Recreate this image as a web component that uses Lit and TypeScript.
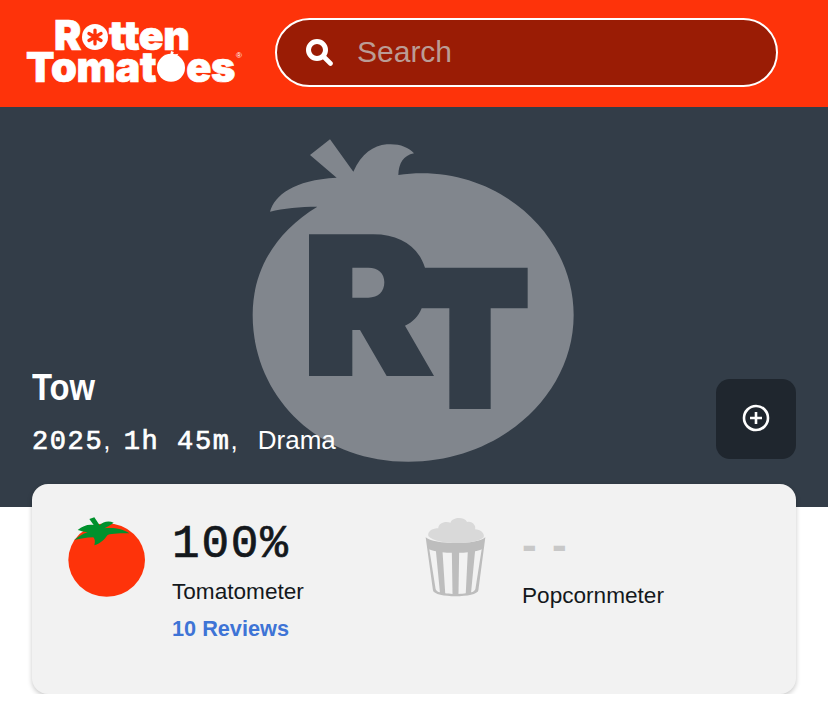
import { LitElement, html, css } from 'lit';
import { customElement } from 'lit/decorators.js';

const SANS = css`"Liberation Sans", Arial, sans-serif`;
const MONO = css`"Liberation Mono", "Courier New", monospace`;

@customElement('app-root')
export class AppRoot extends LitElement {
  static styles = css`
    :host {
      display: block;
      font-family: ${SANS};
      background: #fff;
      color: #14181c;
    }

    .header {
      height: 107px;
      box-sizing: border-box;
      background: #fe330a;
      display: flex;
      align-items: center;
      padding: 0 50px 3px 26px;
      gap: 36px;
    }

    .logo {
      width: 213px;
      flex: none;
      position: relative;
      display: flex;
      flex-direction: column;
      align-items: flex-start;
      margin-bottom: 4px;
      color: #fff;
      font-family: Inter, ${SANS};
      font-weight: 900;
      line-height: 29px;
      -webkit-text-stroke: 0.7px #fff;
    }

    .logo-line {
      display: flex;
      align-items: baseline;
      height: 29px;
      white-space: nowrap;
    }

    .logo-top {
      font-size: 41px;
      letter-spacing: -0.4px;
      margin-left: 28px;
    }

    .logo-bottom {
      font-size: 41.5px;
      letter-spacing: -0.3px;
    }

    .logo-o {
      flex: none;
      margin: 0 1px -1px 1px;
    }

    .reg {
      position: absolute;
      right: -3px;
      top: 31px;
      font-size: 8px;
      line-height: 8px;
      letter-spacing: 0;
      font-family: ${SANS};
      font-weight: 400;
      -webkit-text-stroke: 0;
    }

    .search {
      flex: 1;
      height: 69px;
      box-sizing: border-box;
      display: flex;
      align-items: center;
      gap: 24px;
      padding-left: 28px;
      background: #9a1c05;
      border: 2px solid #fff;
      border-radius: 35px;
    }

    .search svg {
      flex: none;
    }

    .search input {
      flex: 1;
      min-width: 0;
      border: 0;
      outline: 0;
      background: transparent;
      padding: 0;
      font: 30px ${SANS};
      color: #fff;
    }

    .search input::placeholder {
      color: #bb9c95;
      opacity: 1;
    }

    .hero {
      position: relative;
      height: 400px;
      box-sizing: border-box;
      background: #333d48;
      color: #fff;
      padding: 0 32px 48px;
      display: flex;
      align-items: flex-end;
      justify-content: space-between;
    }

    .watermark {
      position: absolute;
      left: 240px;
      top: 18px;
    }

    .info {
      position: relative;
      margin-bottom: -1px;
    }

    .title {
      font-size: 36px;
      font-weight: 700;
      line-height: 44px;
      margin: 0 0 12px;
      transform: scaleX(0.91);
      transform-origin: left center;
    }

    .meta {
      display: flex;
      align-items: baseline;
      font-size: 26px;
      line-height: 36px;
      white-space: pre;
    }

    .meta b {
      font-family: ${MONO};
      font-weight: 400;
      font-size: 27px;
      letter-spacing: 1.6px;
      -webkit-text-stroke: 0.7px #fff;
    }

    .meta .sep {
      margin-right: 6px;
    }

    .meta .genre {
      margin-left: 20px;
    }

    .add {
      position: relative;
      width: 80px;
      height: 80px;
      padding: 0 0 3px;
      box-sizing: border-box;
      border: 0;
      border-radius: 14px;
      background: #1f262e;
      display: flex;
      align-items: center;
      justify-content: center;
    }

    .card {
      position: relative;
      height: 210px;
      box-sizing: border-box;
      margin: -23px 32px 0;
      padding: 33px 0 0 35px;
      background: #f2f2f2;
      border-radius: 16px;
      box-shadow: 0 2px 5px rgba(0, 0, 0, 0.22);
      display: grid;
      grid-template-columns: 357px 1fr;
    }

    .meter {
      display: flex;
      align-items: flex-start;
    }

    .tomato {
      flex: none;
      margin: -2px 25px 0 0;
    }

    .popcorn {
      flex: none;
      margin: -1px 36px 0 1px;
    }

    .score {
      font-family: ${MONO};
      font-weight: 400;
      font-size: 46px;
      line-height: 52px;
      margin-top: 2px;
      letter-spacing: 1.8px;
      color: #14181c;
      -webkit-text-stroke: 0.7px #14181c;
    }

    .score.empty {
      font-family: ${SANS};
      font-weight: 700;
      font-size: 44px;
      color: #c8c8c8;
      letter-spacing: 1.5px;
      margin-top: 2px;
      margin-bottom: 12px;
      -webkit-text-stroke: 0;
    }

    .label {
      font-size: 22.6px;
      line-height: 26px;
      margin-top: 8px;
    }

    .reviews {
      display: block;
      margin-top: 11px;
      font-size: 21.7px;
      line-height: 26px;
      font-weight: 700;
      color: #3e74d6;
      text-decoration: none;
    }
  `;

  render() {
    return html`
      <header class="header">
        <div class="logo" aria-label="Rotten Tomatoes">
          <div class="logo-line logo-top">
            R<svg class="logo-o" width="26" height="26" viewBox="0 0 30 30">
              <circle cx="15" cy="15" r="15" fill="#fff" />
              <g stroke="#fe330a" stroke-width="3.8" stroke-linecap="round">
                <path d="M15 7v16M8 11l14 8M22 11l-14 8" />
              </g>
            </svg>tten
          </div>
          <div class="logo-line logo-bottom">
            Tomat<svg class="logo-o" width="28" height="32" viewBox="0 0 30 34">
              <ellipse cx="15" cy="19" rx="15" ry="15" fill="#fff" />
              <path d="M8 5l6 1 1-5 3 1-1 3 6-1-4 5H11z" fill="#fff" />
            </svg>es
          </div>
          <span class="reg">®</span>
        </div>
        <label class="search">
          <svg width="28" height="28" viewBox="0 0 28 28" fill="none" stroke="#fff">
            <circle cx="12" cy="12" r="8.5" stroke-width="5" />
            <path d="M18.5 18.5l7 7" stroke-width="4.6" stroke-linecap="round" />
          </svg>
          <input type="text" placeholder="Search" aria-label="Search" />
        </label>
      </header>

      <section class="hero">
        <svg class="watermark" width="345" height="345" viewBox="0 0 1035 1035">
          <path
            fill="#81868d"
            fill-rule="evenodd"
            d="M210 90L270 43L340 140C365 85 400 62 440 58C475 55 505 65 522 85C490 92 476 115 475 150C760 110 1001 320 1001 570C1001 812 778 1010 505 1010C232 1010 38 812 38 570C38 430 110 320 232 245C180 245 130 250 90 260C105 210 160 165 290 158Z
               M207 328H400C480 328 535 365 555 428H863V550H752V852H628V550H545C535 575 518 592 495 602L582 753H440L360 615H337V753H207Z
               M337 428H385C415 428 433 445 433 472C433 500 415 518 385 518H337Z"
          />
        </svg>
        <div class="info">
          <h1 class="title">Tow</h1>
          <div class="meta"><b>2025</b><span class="sep">, </span><b>1h 45m</b>,<span class="genre">Drama</span></div>
        </div>
        <button class="add" aria-label="Add to watchlist">
          <svg width="28" height="28" viewBox="0 0 28 28" fill="none" stroke="#fff">
            <circle cx="14" cy="14" r="12" stroke-width="2.6" />
            <path d="M8 14h12M14 8v12" stroke-width="2.6" />
          </svg>
        </button>
      </section>

      <section class="card">
        <div class="meter">
          <svg class="tomato" width="80" height="84" viewBox="48 45 240 252">
            <ellipse cx="167" cy="180" rx="115" ry="110" fill="#fe330a" />
            <path
              fill="#00912d"
              d="M70 120C85 108 95 102 110 97C95 95 88 92 80 90C95 78 110 72 128 75L115 57L130 52L146 76C155 66 172 60 188 68C178 76 168 80 160 85C185 82 215 85 235 100C210 100 185 100 170 105C160 118 150 130 130 136C133 125 132 118 127 112C105 113 88 116 70 120Z"
            />
          </svg>
          <div>
            <div class="score">100%</div>
            <div class="label">Tomatometer</div>
            <a class="reviews" href="#">10 Reviews</a>
          </div>
        </div>
        <div class="meter">
          <svg class="popcorn" width="61" height="81" viewBox="45 48 184 244">
            <path
              fill="#bdbdbd"
              d="M47 112C70 135 205 135 227 112L206 272C203 296 72 296 69 272Z"
            />
            <path
              fill="#f2f2f2"
              d="M58 148C64 151 72 153 78 154L90 278C84 277 79 274 77 268Z
                 M98 157C106 158 116 159 126 159L128 283C120 283 112 282 106 281Z
                 M148 159C156 159 166 158 174 157L168 281C162 282 154 283 146 283Z
                 M196 154C202 153 210 151 216 148L197 268C195 274 190 277 184 278Z"
            />
            <path
              fill="#d9d9d9"
              d="M55 108C52 92 70 85 85 85C85 70 105 62 122 68C128 50 165 50 172 66C188 62 200 78 196 88C212 88 226 100 222 112C200 136 80 136 55 108Z"
            />
          </svg>
          <div>
            <div class="score empty">- -</div>
            <div class="label">Popcornmeter</div>
          </div>
        </div>
      </section>
    `;
  }
}
